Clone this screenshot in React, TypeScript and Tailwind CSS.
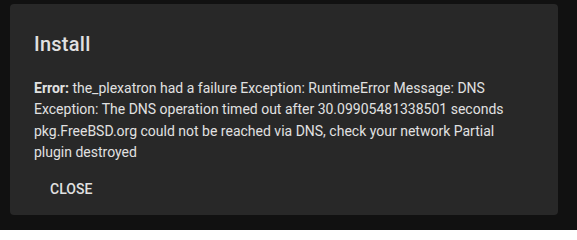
export default function App() {
  return (
    <div className="h-[230px] w-[577px] bg-[#111111] pl-[10px] pt-[4px] font-['Roboto',sans-serif]">
      <div className="flex h-[211px] w-[548px] flex-col rounded-[4px] bg-[#282828]">
        {/* title */}
        <h2 className="px-6 pt-6 text-[20px] font-medium leading-[32px] tracking-[0.0125em] text-[#e1e1e1]">
          Install
        </h2>
        {/* body */}
        <p className="px-6 pt-[18px] text-[14px] leading-[21.3px] text-[#e1e1e1]">
          <span className="font-bold">Error: </span>
          the_plexatron had a failure Exception: RuntimeError Message: DNS
          Exception: The DNS operation timed out after 30.09905481338501 seconds
          pkg.FreeBSD.org could not be reached via DNS, check your network
          Partial plugin destroyed
        </p>
        {/* actions */}
        <div className="mt-auto flex p-2 pl-6">
          <button
            type="button"
            className="h-9 rounded-[4px] px-4 text-[14px] font-medium uppercase text-[#e1e1e1]"
          >
            Close
          </button>
        </div>
      </div>
    </div>
  );
}
